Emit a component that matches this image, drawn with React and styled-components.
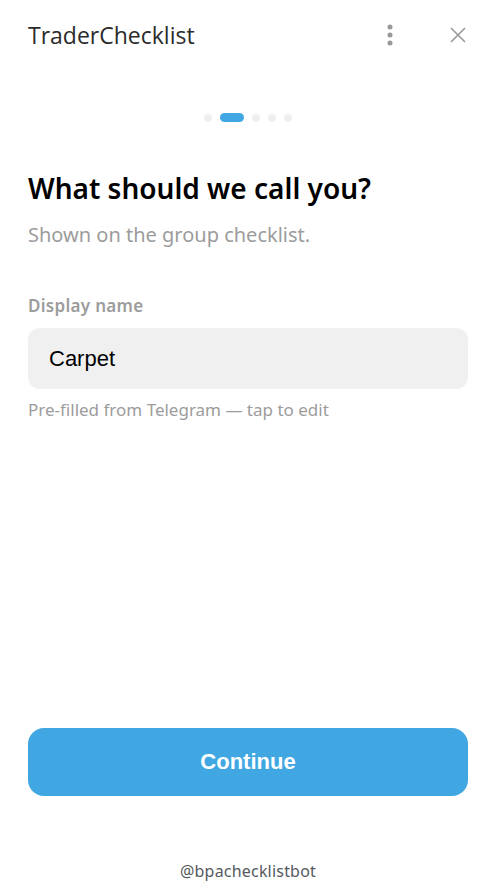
import React from "react";
import styled, { createGlobalStyle } from "styled-components";

const Global = createGlobalStyle`
  html, body { margin: 0; padding: 0; background: #ffffff; }
  body { font-family: "Noto Sans", "Open Sans", sans-serif; }
  * { box-sizing: border-box; }
`;

const Page = styled.div`
  display: flex;
  flex-direction: column;
  height: 892px;
  background: #fff;
`;

const Header = styled.header`
  display: flex;
  align-items: center;
  height: 70px;
  padding: 0 22px 0 28px;
`;

const Title = styled.h1`
  margin: 0;
  flex: 1;
  font-family: "Open Sans", sans-serif;
  font-weight: 500;
  font-size: 23px;
  color: #2b2b2b;
`;

const IconButton = styled.button`
  display: flex;
  align-items: center;
  justify-content: center;
  width: ${(p) => p.$w}px;
  height: 40px;
  padding: 0;
  border: 0;
  background: none;
  margin-left: ${(p) => p.$ml || 0}px;
`;

const Body = styled.main`
  display: flex;
  flex-direction: column;
  flex: 1;
  padding: 0 22px 0 28px;
`;

const Progress = styled.div`
  display: flex;
  justify-content: center;
  align-items: center;
  gap: 8px;
  margin: 43px 0 0;
  height: 9px;
`;

const Dot = styled.span`
  display: block;
  width: ${(p) => (p.$active ? 24 : 8)}px;
  height: ${(p) => (p.$active ? 9 : 8)}px;
  border-radius: 5px;
  background: ${(p) => (p.$active ? "#40a7e3" : "#efefef")};
`;

const Heading = styled.h2`
  margin: 48px 0 0;
  font-family: "Noto Sans", sans-serif;
  font-weight: 600;
  font-size: 28px;
  line-height: 36px;
  color: #000;
`;

const Subtitle = styled.p`
  margin: 15px 0 0;
  font-size: 20px;
  line-height: 28px;
  color: #9c9c9c;
`;

const Label = styled.label`
  display: block;
  margin: 46px 0 11px;
  font-size: 17px;
  line-height: 22px;
  font-weight: 600;
  letter-spacing: 0.3px;
  color: #9c9c9c;
`;

const Input = styled.input`
  display: block;
  width: 440px;
  height: 61px;
  padding: 0 21px;
  border: 0;
  border-radius: 12px;
  background: #f0f0f0;
  font-family: "Liberation Sans", Arial, sans-serif;
  font-size: 22px;
  color: #000;
  outline: none;
`;

const Hint = styled.p`
  margin: 10px 0 0;
  font-size: 17px;
  line-height: 22px;
  color: #9c9c9c;
`;

const Continue = styled.button`
  margin-top: auto;
  width: 440px;
  height: 68px;
  border: 0;
  border-radius: 16px;
  background: #40a7e3;
  color: #fff;
  font-family: "Liberation Sans", Arial, sans-serif;
  font-weight: 700;
  font-size: 22px;
`;

const Footer = styled.footer`
  margin: 65px 0 11px;
  padding-left: 6px;
  text-align: center;
  font-size: 16px;
  line-height: 20px;
  letter-spacing: 0.2px;
  color: #555a60;
`;

export default function App() {
  return (
    <Page>
      <Global />
      <Header>
        <Title>TraderChecklist</Title>
        <IconButton $w={20} aria-label="menu">
          <svg width="6" height="22" viewBox="0 0 6 22">
            <circle cx="3" cy="3" r="2.5" fill="#999" />
            <circle cx="3" cy="11" r="2.5" fill="#999" />
            <circle cx="3" cy="19" r="2.5" fill="#999" />
          </svg>
        </IconButton>
        <IconButton $w={20} $ml={48} aria-label="close">
          <svg width="16" height="16" viewBox="0 0 16 16">
            <path d="M1 1 L15 15 M15 1 L1 15" stroke="#999" strokeWidth="1.6" fill="none" />
          </svg>
        </IconButton>
      </Header>
      <Body>
        <Progress>
          <Dot />
          <Dot $active />
          <Dot />
          <Dot />
          <Dot />
        </Progress>
        <Heading>What should we call you?</Heading>
        <Subtitle>Shown on the group checklist.</Subtitle>
        <Label htmlFor="name">Display name</Label>
        <Input id="name" defaultValue="Carpet" />
        <Hint>Pre-filled from Telegram — tap to edit</Hint>
        <Continue>Continue</Continue>
      </Body>
      <Footer>@bpachecklistbot</Footer>
    </Page>
  );
}
